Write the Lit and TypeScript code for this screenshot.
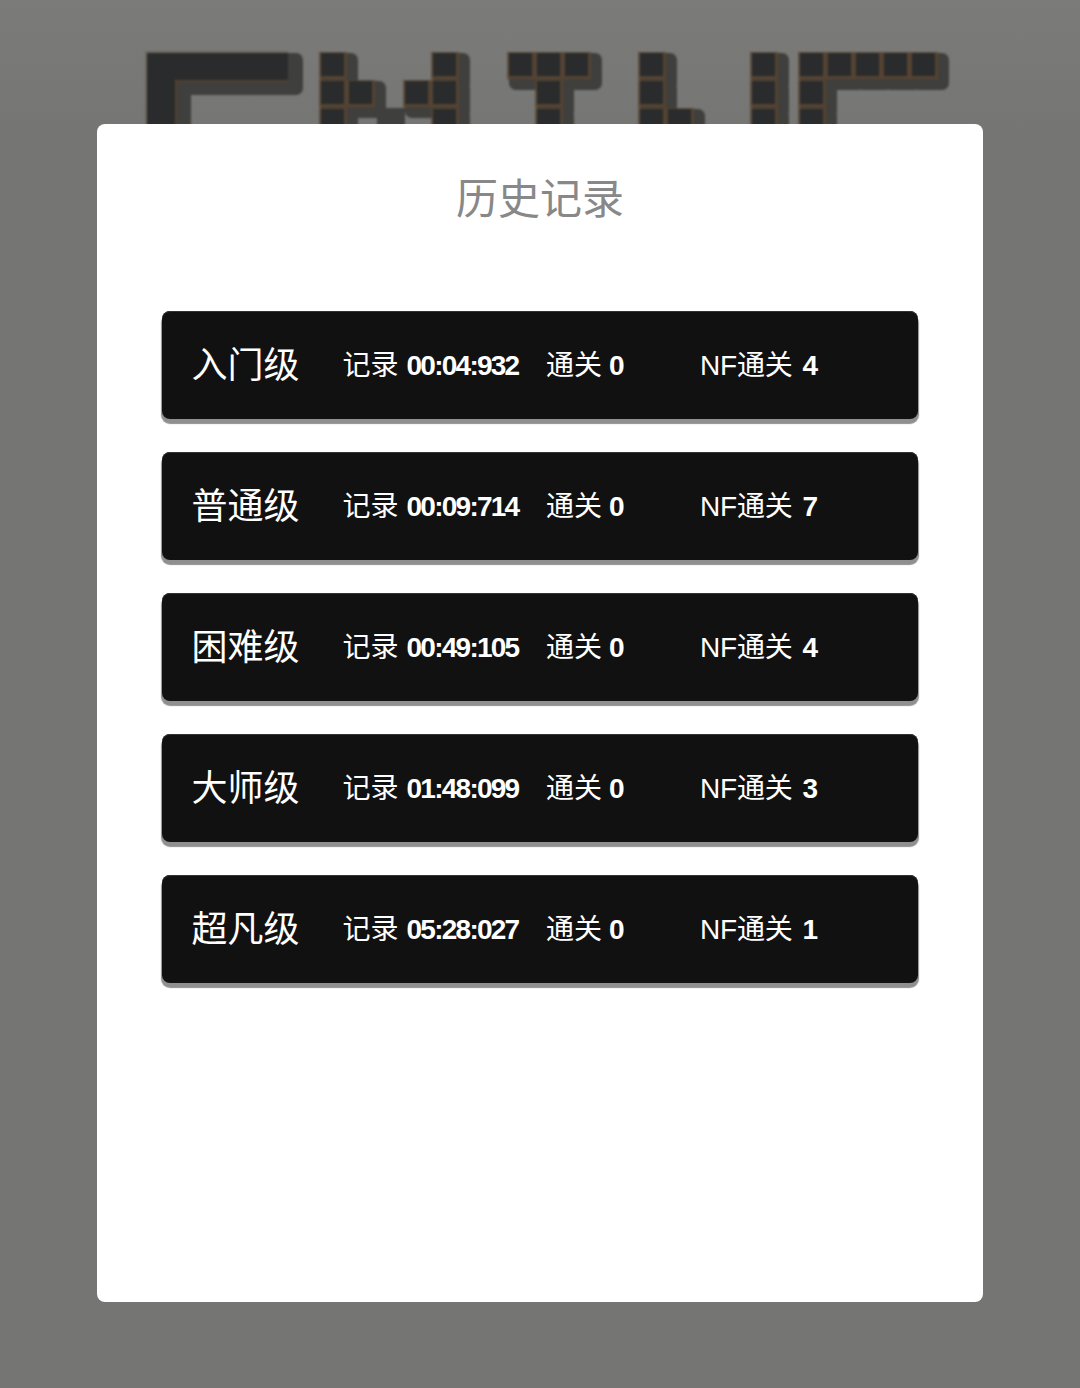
import { LitElement, html, css, svg } from "lit";
import { customElement } from "lit/decorators.js";

const P = 28;
const S = 23;
const place = (ox: number, cells: number[][]) =>
  cells.map(([c, r]) => [ox + c * P, 53 + r * P] as [number, number]);
const tiles: [number, number][] = [
  ...place(321, [[0,0],[4,0],[0,1],[1,1],[3,1],[4,1],[0,2],[4,2]]),
  ...place(509, [[0,0],[1,0],[2,0],[1,1],[1,2]]),
  ...place(640, [[0,0],[0,1],[0,2],[1,2]]),
  ...place(752, [[0,0],[0,1],[0,2]]),
  ...place(800, [[0,0],[1,0],[2,0],[3,0],[4,0],[0,1],[0,2]]),
];

const rows = [
  { name: "入门级", time: "00:04:932", clear: 0, nf: 4 },
  { name: "普通级", time: "00:09:714", clear: 0, nf: 7 },
  { name: "困难级", time: "00:49:105", clear: 0, nf: 4 },
  { name: "大师级", time: "01:48:099", clear: 0, nf: 3 },
  { name: "超凡级", time: "05:28:027", clear: 0, nf: 1 },
];

@customElement("app-root")
export class AppRoot extends LitElement {
  static styles = css`
    :host {
      display: block;
      position: relative;
      height: 1388px;
      background: linear-gradient(#7b7b79, #757573 140px);
      font-family: "Liberation Sans", "Noto Sans CJK SC", sans-serif;
      overflow: hidden;
    }
    .logo { position: absolute; left: 0; top: 0; width: 1080px; height: 130px; filter: blur(0.8px); }
    .page { position: relative; padding: 124px 97px 0; }
    .modal {
      box-sizing: border-box;
      height: 1178px;
      background: #fff;
      border-radius: 8px;
      padding: 51px 65px 0 65px;
    }
    h1 {
      margin: 0;
      height: 136px;
      font-weight: 400;
      font-size: 42px;
      line-height: 50px;
      color: #888;
      text-align: center;
    }
    .list { display: flex; flex-direction: column; gap: 33px; }
    .row {
      box-sizing: border-box;
      height: 108px;
      background: #111;
      border-radius: 8px;
      box-shadow: inset 0 1px 0 #333, 0 4px 1px 1px #8f8f8f;
      display: flex;
      align-items: center;
      padding: 0 0 4px 29.5px;
      color: #fff;
      font-size: 28px;
    }
    .name { width: 151px; font-size: 36px; white-space: nowrap; position: relative; top: -1px; }
    .rec { width: 203.5px; white-space: nowrap; }
    .clr { width: 154px; white-space: nowrap; }
    .nf { white-space: nowrap; }
    b { font-weight: 700; letter-spacing: -1.75px; margin-left: 8px; }
    .clr b { letter-spacing: 0; margin-left: 7px; }
    .nf b { letter-spacing: 0; margin-left: 10px; }
    .nfl { letter-spacing: -0.2px; }
  `;

  private logo() {
    const dark = "#2a2b2c";
    const shadow = "#3f3f3d";
    const line = "#5a4530";
    return svg`
      <svg class="logo" viewBox="0 0 1080 130">
        <g fill=${shadow}>
          <path d="M147 53H296a7 7 0 0 1 7 7V88a7 7 0 0 1-7 7H191V130H147Z"/>
          ${tiles.map(([x, y]) => svg`<rect x=${x} y=${y} width=${S + 14} height=${S + 14} rx="7"/>`)}
          <rect x="377" y="108" width="28" height="22"/>
        </g>
        <path d="M147 53H288V81H176V130H147Z" fill=${dark}/>
        <path d="M176 130V81H288" fill="none" stroke=${line} stroke-width="2.5" opacity=".7"/>
        <path d="M146 130V52H288" fill="none" stroke=${line} stroke-width="1.5" opacity=".45"/>
        ${tiles.map(([x, y]) => svg`
          <rect x=${x - 2} y=${y - 1} width=${S + 5} height=${S + 4.5} fill=${line} opacity=".8"/>
          <rect x=${x} y=${y} width=${S} height=${S} fill=${dark}/>`)}
      </svg>`;
  }

  render() {
    return html`
      ${this.logo()}
      <div class="page">
        <section class="modal">
          <h1>历史记录</h1>
          <div class="list">
            ${rows.map((r) => html`
              <div class="row">
                <span class="name">${r.name}</span>
                <span class="rec">记录<b>${r.time}</b></span>
                <span class="clr">通关<b>${r.clear}</b></span>
                <span class="nf"><span class="nfl">NF通关</span><b>${r.nf}</b></span>
              </div>`)}
          </div>
        </section>
      </div>
    `;
  }
}
